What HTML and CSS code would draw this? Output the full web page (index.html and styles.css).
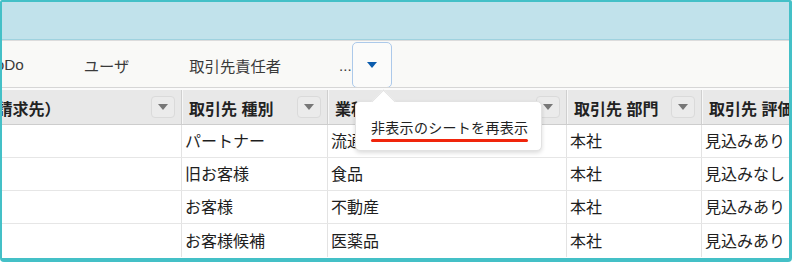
FILE: index.html
```html
<!DOCTYPE html>
<html lang="ja">
<head>
<meta charset="utf-8">
<link rel="stylesheet" href="styles.css">
</head>
<body>
<div class="frame">
  <div class="band"></div>
  <div class="tabbar">
    <div class="tabs">
      <span class="tab">ToDo</span>
      <span class="tab">ユーザ</span>
      <span class="tab">取引先責任者</span>
      <span class="more">...</span>
      <button class="overflow-btn"><span class="tri-blue"></span></button>
    </div>
  </div>
  <div class="gap"></div>
  <div class="view">
    <div class="table">
      <div class="row head">
        <div class="hcell"><span class="htext">取引先 （請求先）</span><span class="fbtn"><span class="tri-grey"></span></span></div>
        <div class="hcell"><span class="htext">取引先 種別</span><span class="fbtn"><span class="tri-grey"></span></span></div>
        <div class="hcell"><span class="htext">業種</span><span class="fbtn"><span class="tri-grey"></span></span></div>
        <div class="hcell"><span class="htext">取引先 部門</span><span class="fbtn"><span class="tri-grey"></span></span></div>
        <div class="hcell"><span class="htext">取引先 評価</span><span class="fbtn"><span class="tri-grey"></span></span></div>
      </div>
      <div class="row">
        <div class="cell"></div><div class="cell">パートナー</div><div class="cell">流通</div><div class="cell">本社</div><div class="cell">見込みあり</div>
      </div>
      <div class="row">
        <div class="cell"></div><div class="cell">旧お客様</div><div class="cell">食品</div><div class="cell">本社</div><div class="cell">見込みなし</div>
      </div>
      <div class="row">
        <div class="cell"></div><div class="cell">お客様</div><div class="cell">不動産</div><div class="cell">本社</div><div class="cell">見込みあり</div>
      </div>
      <div class="row last">
        <div class="cell"></div><div class="cell">お客様候補</div><div class="cell">医薬品</div><div class="cell">本社</div><div class="cell">見込みあり</div>
      </div>
    </div>
  </div>
  <div class="tooltip">
    <span class="arrow"></span>
    <div class="tip-text">非表示のシートを再表示</div>
    <div class="mark"></div>
  </div>
</div>
</body>
</html>
```

FILE: styles.css
```css
* { box-sizing: border-box; }
html, body { margin: 0; padding: 0; }
body {
  width: 792px;
  height: 262px;
  overflow: hidden;
  background: #ffffff;
  font-family: "Liberation Sans", "Noto Sans CJK JP", sans-serif;
  color: #1e1e1e;
}
.frame {
  position: relative;
  width: 792px;
  height: 262px;
  border-style: solid;
  border-color: #44c0c7;
  border-width: 2px 3px 4px 2px;
  border-radius: 2px 2px 4px 4px;
  overflow: hidden;
  background: #ffffff;
}
.band {
  height: 38px;
  background: #c1e2eb;
  border-bottom: 1px solid #9fd2df;
}
.tabbar {
  height: 48px;
  background: #f9f9f7;
  border-top: 1px solid #dcdcdc;
  border-bottom: 1px solid #d6d6d6;
  overflow: hidden;
}
.tabs {
  display: flex;
  align-items: center;
  height: 100%;
  margin-left: -14px;
}
.tab {
  padding: 2px 30px 0;
  font-size: 15.3px;
  color: #3a3a3a;
  white-space: nowrap;
}
.tab:first-child { padding-left: 0; }
.more {
  padding-top: 2px;
  font-size: 15px;
  color: #3a3a3a;
  margin-left: 28px;
  width: 11px;
  white-space: nowrap;
}
.overflow-btn {
  margin-left: 1.5px;
  width: 40px;
  height: 46px;
  margin-top: 1px;
  border: 1px solid #acc9ea;
  border-radius: 5px;
  background: #fbfbfa;
  display: flex;
  align-items: center;
  justify-content: center;
  padding: 0;
}
.tri-blue {
  width: 0;
  height: 0;
  border-left: 5.5px solid transparent;
  border-right: 5.5px solid transparent;
  border-top: 6px solid #0b5cad;
}
.gap {
  height: 2px;
  background: #fbfbfb;
}
.view {
  overflow: hidden;
  height: 170px;
}
.table {
  margin-left: -81px;
  width: 960px;
}
.row {
  display: grid;
  grid-template-columns: 260px 146px 239px 135px 180px;
  height: 33px;
  border-bottom: 1px solid #e6e6e6;
}
.row.head {
  height: 35px;
  background: #e8e8e8;
  border-bottom: 1px solid #cdcdcd;
}
.row.last { border-bottom: none; }
.hcell {
  display: flex;
  align-items: center;
  justify-content: space-between;
  padding: 0 6px 0 7px;
  font-size: 16px;
  font-weight: 700;
  color: #222;
  white-space: nowrap;
  overflow: hidden;
}
.htext { padding-top: 2px; }
.hcell + .hcell {
  border-left: 1px solid #cfcfcf;
  box-shadow: inset 1px 0 0 #f7f7f7;
}
.fbtn {
  flex: none;
  width: 24px;
  height: 22px;
  border: 1px solid #dadada;
  border-radius: 4px;
  background: #ebebeb;
  display: flex;
  align-items: center;
  justify-content: center;
}
.tri-grey {
  width: 0;
  height: 0;
  border-left: 5px solid transparent;
  border-right: 5px solid transparent;
  border-top: 6px solid #777;
}
.cell {
  display: flex;
  align-items: center;
  padding: 0 0 2px 3px;
  font-size: 16px;
  color: #1e1e1e;
  white-space: nowrap;
}
.cell + .cell { border-left: 1px solid #e3e3e3; }
.tooltip {
  position: absolute;
  left: 353px;
  top: 99px;
  width: 187px;
  height: 50px;
  background: #ffffff;
  border-radius: 5px;
  border: 1px solid #e2e2e2;
  box-shadow: 0 2px 4px rgba(0, 0, 0, 0.14);
  padding: 17px 0 0 15px;
}
.arrow {
  position: absolute;
  left: 19px;
  top: -9px;
  width: 17px;
  height: 17px;
  background: #ffffff;
  border-top: 1px solid #e2e2e2;
  border-left: 1px solid #e2e2e2;
  transform: rotate(45deg);
}
.tip-text {
  position: relative;
  font-size: 14px;
  letter-spacing: 0.3px;
  line-height: 18px;
  color: #222;
  white-space: nowrap;
}
.mark {
  margin-top: 2px;
  width: 157px;
  height: 3px;
  border-radius: 2px;
  background: #f0250c;
}
```
